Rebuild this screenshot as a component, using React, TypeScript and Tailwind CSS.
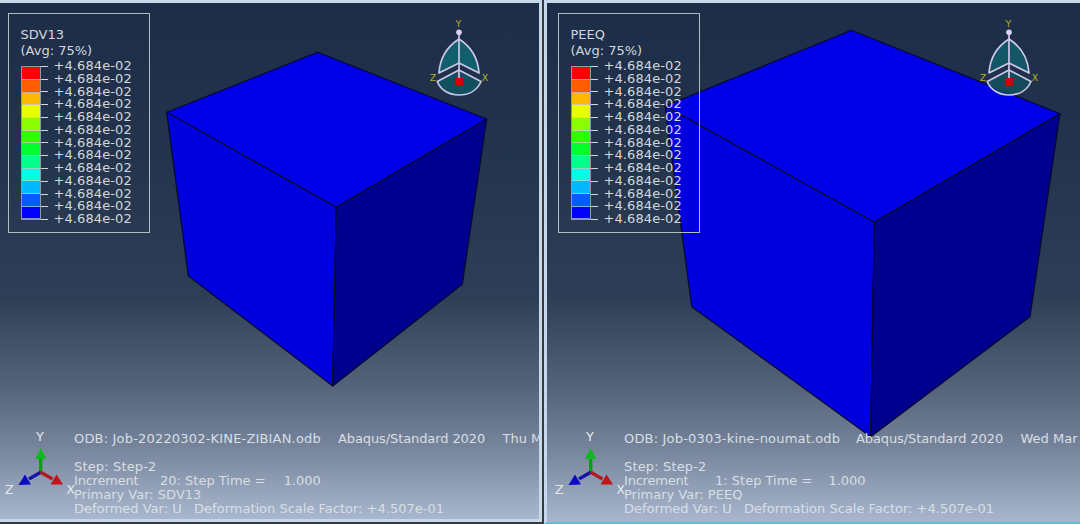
const FONT = "font-['DejaVu_Sans',sans-serif]";

// legend colours, top to bottom
const BANDS = [
  "bg-[#ff0000]",
  "bg-[#ff5d00]",
  "bg-[#ffb900]",
  "bg-[#e8ff00]",
  "bg-[#8bff00]",
  "bg-[#2eff00]",
  "bg-[#00ff2e]",
  "bg-[#00ff8b]",
  "bg-[#00ffe8]",
  "bg-[#00b9ff]",
  "bg-[#005dff]",
  "bg-[#0000ff]",
];
const TICKS = Array.from({ length: 13 }, (_, i) => i);

type Pt = [number, number];
type CubeShape = { top: Pt; left: Pt; right: Pt; mid: Pt; bl: Pt; bottom: Pt; br: Pt };

function poly(...pts: Pt[]) {
  return pts.map((p) => p.join(",")).join(" ");
}

function Cube({ c }: { c: CubeShape }) {
  return (
    <svg className="absolute inset-0" width="550" height="524" viewBox="0 0 550 524">
      <g stroke="#08082e" strokeWidth="1.2" strokeLinejoin="round">
        <polygon points={poly(c.top, c.right, c.mid, c.left)} fill="#0000e8" />
        <polygon points={poly(c.left, c.mid, c.bottom, c.bl)} fill="#0000de" />
        <polygon points={poly(c.mid, c.right, c.br, c.bottom)} fill="#00008f" />
      </g>
    </svg>
  );
}

function Legend({ name }: { name: string }) {
  return (
    <div className="absolute left-[13px] top-[13px] w-[142px] h-[220px] border-[1.5px] border-[#b4bcc6] pl-[11.5px] pt-[13px] text-[13px] text-[#d3d7dc] whitespace-pre">
      <div className="leading-[16px]">{name}</div>
      <div className="leading-[16px]">(Avg: 75%)</div>
      <div className="flex mt-[1px]">
        <div className="mt-[6.4px] w-[20px] h-[154px] flex flex-col border border-[#8f98a4]">
          {BANDS.map((b) => (
            <div key={b} className={`flex-1 border-b border-[#c4ccd4]/70 ${b}`} />
          ))}
        </div>
        <div className="flex flex-col">
          {TICKS.map((i) => (
            <div key={i} className="h-[12.77px] flex items-center leading-[12.77px]">
              <div className="w-[7px] h-px bg-[#d3d7dc] mr-[6px]" />
              <span className="tracking-[0.1px]">+4.684e-02</span>
            </div>
          ))}
        </div>
      </div>
    </div>
  );
}

// view cube compass at the top right of each viewport
function Compass({ fade }: { fade?: boolean }) {
  const o = fade ? 0.82 : 1;
  return (
    <svg className="absolute left-[424px] top-[15px]" width="80" height="85" viewBox="0 0 80 85">
      <path d="M40 24 C29 31 21 43 20 58 L37.5 48.5 L40 48.3 Z" fill="#115f6d" fillOpacity={o} />
      <path d="M40 24 C51 31 59 43 60 58 L42.5 48.5 L40 48.3 Z" fill="#115f6d" fillOpacity={o} />
      <path d="M40 55 L18.3 66.5 C22 76 31 80 40 80 C49 80 58 76 62 66.5 Z" fill="#12505f" fillOpacity={o} />
      <g fill="none" stroke="#cdc6e8" strokeWidth="1.7" strokeLinejoin="round">
        <path d="M40 24 C29 31 21 43 20 58 L40 48 L60 58 C59 43 51 31 40 24 Z" />
        <path d="M40 55 L18.3 66.5 C22 76 31 80 40 80 C49 80 58 76 62 66.5 Z" />
        <path d="M40 18 L40 63" />
      </g>
      <circle cx="40" cy="17.3" r="2.8" fill="#dcd2f2" />
      <rect x="36.2" y="63" width="8" height="7.8" fill="#d20000" />
      <g fill="#b8b020" fontSize="9.5" textAnchor="middle" className={FONT}>
        <text x="39.3" y="11.5">Y</text>
        <text x="14" y="65.5">Z</text>
        <text x="66" y="65.5">X</text>
      </g>
    </svg>
  );
}

// global xyz triad at the bottom left
function Triad() {
  return (
    <svg className="absolute left-[8px] top-[425px]" width="78" height="74" viewBox="0 0 78 74">
      <path d="M37.7 47.3 L37.7 32" stroke="#0b9c18" strokeWidth="3.4" />
      <path d="M37.7 23 L32 34 L43.4 34 Z" fill="#10b81f" />
      <path d="M37.7 47.3 L26 54" stroke="#1616a8" strokeWidth="3.4" />
      <path d="M15.5 60 L22 49.5 L28 59.5 Z" fill="#0a0ac4" />
      <path d="M37.7 47.3 L49.5 54" stroke="#b01c1c" strokeWidth="3.4" />
      <path d="M60 59.5 L53.5 49.5 L47.5 59.5 Z" fill="#c01616" />
      <g fill="#e4e8ee" fontSize="13" textAnchor="middle" className={FONT}>
        <text x="37" y="16">Y</text>
        <text x="6.3" y="69">Z</text>
        <text x="67.7" y="69">X</text>
      </g>
    </svg>
  );
}

type Info = {
  odb: string;
  date: string;
  inc: string;
  incWidth: string;
  timeGap: string;
  variable: string;
  odbWidth: string;
};

function Caption({ info }: { info: Info }) {
  return (
    <div className="absolute left-[79px] top-[431px] text-[13px] text-[#d9dee5] whitespace-pre leading-[14px]">
      <div className="flex leading-[16px] mb-[13px]">
        <span className={`${info.odbWidth} tracking-[0.18px]`}>ODB: {info.odb}</span>
        <span className="w-[164.5px] tracking-[-0.1px]">Abaqus/Standard 2020</span>
        <span>{info.date}</span>
      </div>
      <div className="tracking-[0.15px]">Step: Step-2</div>
      <div className="flex">
        <span className={`${info.incWidth} tracking-[-0.2px]`}>Increment</span>
        <span>{info.inc}: Step Time =</span>
        <span className={info.timeGap}>1.000</span>
      </div>
      <div>Primary Var: {info.variable}</div>
      <div>Deformed Var: U   Deformation Scale Factor: +4.507e-01</div>
    </div>
  );
}

function Viewport({
  name,
  cube,
  info,
  fade,
}: {
  name: string;
  cube: CubeShape;
  info: Info;
  fade?: boolean;
}) {
  return (
    <div className="relative w-[550px] h-full shrink-0">
      <Cube c={cube} />
      <Legend name={name} />
      <Compass fade={fade} />
      <Triad />
      <Caption info={info} />
    </div>
  );
}

const BG =
  "bg-[linear-gradient(180deg,#1d2d48_0%,#23344d_30%,#2d3f56_57%,#54637a_74%,#76859b_86%,#a8b7ce_100%)]";

export default function App() {
  return (
    <div className={`flex w-[1080px] h-[524px] bg-[#3a3a3a] overflow-hidden ${FONT}`}>
      <div className={`w-[542px] h-[522px] overflow-hidden border-t-[3px] border-r-[3px] border-b-[3px] border-[#c6d9ec] ${BG}`}>
        <div className="-ml-[5px] -mt-[3px] h-[522px]">
          <Viewport
            name="SDV13"
            info={{
              odb: "Job-20220302-KINE-ZIBIAN.odb",
              date: "Thu Mar",
              inc: "20",
              incWidth: "w-[86px]",
              timeGap: "ml-[18px]",
              variable: "SDV13",
              odbWidth: "w-[264px]",
            }}
            cube={{
              top: [322.7, 52.3],
              left: [171.7, 112.3],
              right: [491.7, 119],
              mid: [341.3, 207.3],
              bl: [193.3, 276],
              bottom: [337.7, 386],
              br: [467.3, 284.3],
            }}
          />
        </div>
      </div>
      <div className={`ml-[2px] flex-1 h-[524px] overflow-hidden border-l-[3px] border-t-[3px] border-b-[2px] border-[#c6d9ec] border-b-[#4cc4dd] ${BG}`}>
        <div className="-ml-[2px] -mt-[3px] h-[522px]">
          <Viewport
            name="PEEQ"
            fade
            info={{
              odb: "Job-0303-kine-noumat.odb",
              date: "Wed Mar",
              inc: "1",
              incWidth: "w-[91px]",
              timeGap: "ml-[16px]",
              variable: "PEEQ",
              odbWidth: "w-[232px]",
            }}
            cube={{
              top: [306.3, 30.3],
              left: [120, 106],
              right: [515, 113.7],
              mid: [329.3, 222.3],
              bl: [146.7, 306.7],
              bottom: [325.7, 436.7],
              br: [485, 316.7],
            }}
          />
        </div>
      </div>
    </div>
  );
}
